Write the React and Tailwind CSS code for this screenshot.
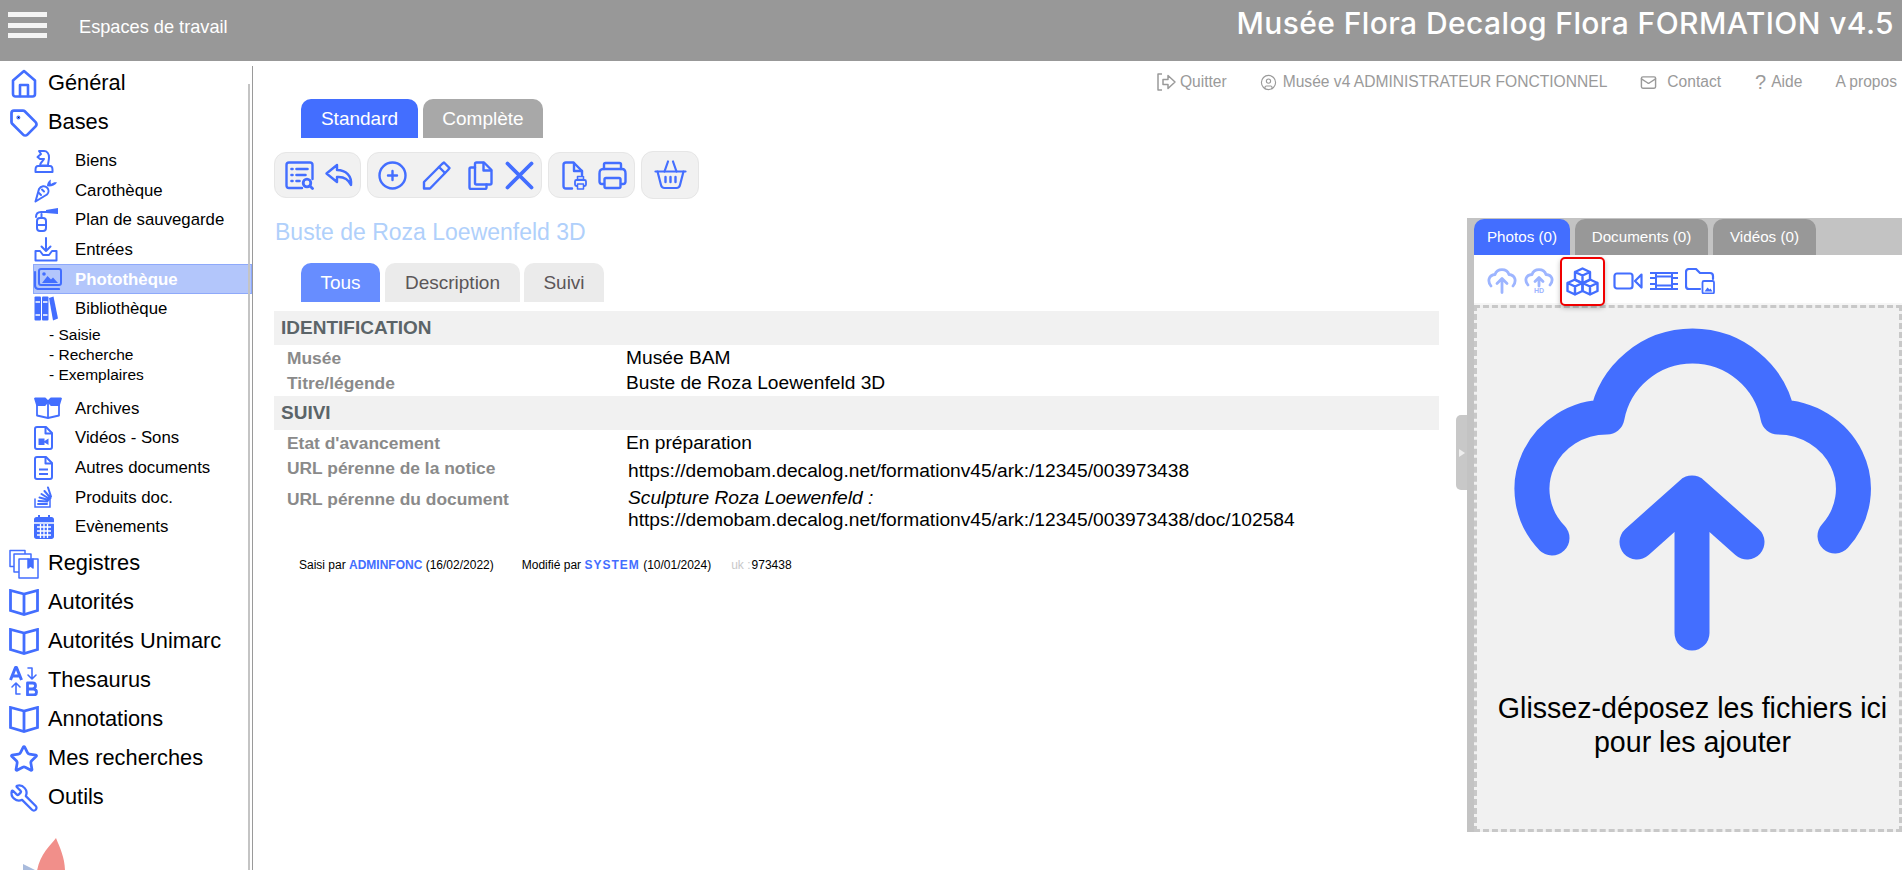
import React from "react";
import { Tag, Star, Wrench, Mail, CircleUser } from "lucide-react";

const BLUE = "#436eff";

function Ico({ children, w: width = 24, h: height = 24, sw = 2, className = "" }) {
  return (
    <svg width={width} height={height} viewBox={`0 0 ${width} ${height}`} fill="none" stroke={BLUE} strokeWidth={sw} strokeLinecap="round" strokeLinejoin="round" className={className}>
      {children}
    </svg>
  );
}

const Home = () => (
  <Ico w={28} h={29} sw={2.600}>
    <path d="M3 11.500 14 2l11 9.500V25c0 1.500-1 2.500-2.500 2.500h-17C4 27.500 3 26.500 3 25V11.500Z" />
    <path d="M10 27V16h8v11" />
  </Ico>
);

const OpenBook = () => (
  <Ico w={30} h={27} sw={2.800}>
    <path d="M15 5 1.500 1.500v20L15 25.500l13.500-4v-20L15 5Z" strokeLinecap="butt" strokeLinejoin="miter" />
    <path d="M15 5v20" strokeLinecap="butt" />
  </Ico>
);

const Stack = () => (
  <Ico w={30} h={30} sw={1.500}>
    <rect x="1" y="1.500" width="15" height="16" />
    <rect x="5" y="5" width="17" height="18" fill="#fff" />
    <path d="M10 29V10h19v19H10Z" fill="#fff" />
    <path d="M19 10v9l2.500-2 2.500 2v-9" fill={BLUE} />
  </Ico>
);

const Thesaurus = () => (
  <svg width="30" height="30" viewBox="0 0 30 30" fill="none" stroke={BLUE} strokeWidth="1.600" strokeLinecap="round" strokeLinejoin="round">
    <path d="M1.500 14 6.500 1.500h1L12.500 14M3.500 10h7" strokeWidth="3" strokeLinecap="butt" />
    <path d="M19 2h4v10M19 9l4 4 4-4" />
    <path d="M11 28H7V18M3 21l4-4 4 4" />
    <path d="M18.500 17h5c4 0 4 5.500 0 6h-5Zm0 6h6c4 .5 4 6 0 6h-6Z" strokeWidth="2.800" />
  </svg>
);

// petites icones de la section Bases
const subIcons = {
  biens: (
    <Ico w={20} h={24} sw={2}>
      <path d="M5 2h5c3 0 5 3 5 6.500 0 3-1 4.500-1 8H6c0-3 3-4 4-6.500H6L3.500 8 7 5 5 2Z" />
      <path d="M1.500 23v-2c0-2 1-4 2.500-4h12c1.500 0 2.500 2 2.500 4v2h-17Z" />
    </Ico>
  ),
  caro: (
    <Ico w={24} h={25} sw={2}>
      <path d="M1.500 23.500 5 11c2-3.500 6-3.500 8-1.500s2 5 0 7l-11.500 7Z" />
      <path d="M5 15l2 2M8 11.500l2 2" />
      <path d="M13 8c0-2 1-5 4-6.500-.5 2-.5 3 0 4.500 2-1.500 4-2 6-1.500-1.500 2.500-5 4-8 4" fill={BLUE} stroke="none" />
    </Ico>
  ),
  plan: (
    <Ico w={24} h={24} sw={2}>
      <rect x="3" y="10" width="9" height="13" rx="3" />
      <path d="M3 17h9M7.500 10V6M2 9c0-3 2-5 5-5h5" />
      <path d="M12 2 24 0v6L12 5V2Z" fill={BLUE} stroke="none" />
    </Ico>
  ),
  entrees: (
    <Ico w={24} h={25} sw={2}>
      <path d="M12 1v13M7.500 9.500l4.500 4.500 4.500-4.500" />
      <path d="M1.500 14v9.500h21V14H18l-3 4H9l-3-4H1.500Z" />
    </Ico>
  ),
  photo: (
    <svg width="28" height="22" viewBox="0 0 28 22" fill="none" stroke={BLUE} strokeWidth="2" strokeLinecap="round" strokeLinejoin="round">
      <rect x="5" y="1" width="22" height="16" rx="2" />
      <path d="M1 4v13c0 2.500 1.500 4 4 4h20" strokeWidth="2.200" />
      <path d="M8 15l5.500-7 3.500 3.500 2-2 5 5.500H8Z" fill={BLUE} stroke="none" />
      <circle cx="10" cy="6" r="1.800" fill={BLUE} stroke="none" />
    </svg>
  ),
  biblio: (
    <svg width="24" height="25" viewBox="0 0 24 25" fill={BLUE}>
      <rect x="0.500" y="0.500" width="6.500" height="24" rx="1" />
      <rect x="8" y="0.500" width="6.500" height="24" rx="1" />
      <path d="M15 2 19.500 0.500 24 22.500l-5 2L15 2Z" />
      <path d="M1.500 6h4.500M1.500 19h4.500M9 6h4.500M9 19h4.500" stroke="#fff" strokeWidth="1.400" />
    </svg>
  ),
  archives: (
    <svg width="28" height="22" viewBox="0 0 28 22" fill="none" stroke={BLUE} strokeWidth="1.800" strokeLinejoin="round">
      <path d="M1 1.500h10l3 3-3 3.500H3L1 1.500Zm26 0H17l-3 3 3 3.500h8l2-6.500Z" fill={BLUE} />
      <path d="M3 8v10.500L14 21l11-2.500V8M14 5v16" />
    </svg>
  ),
  videos: (
    <svg width="19" height="24" viewBox="0 0 19 24" fill="none" stroke={BLUE} strokeWidth="2" strokeLinejoin="round">
      <path d="M3 1h9l6 6v14c0 1.500-.5 2-2 2H3c-1.500 0-2-.5-2-2V3c0-1.500.5-2 2-2Z" />
      <path d="M11.500 1.500V7.500h6" />
      <path d="M4.500 12.500h6v6.500h-6Zm6 2.500 4-2.500v6.500l-4-2.500Z" fill={BLUE} stroke="none" />
    </svg>
  ),
  autres: (
    <svg width="19" height="24" viewBox="0 0 19 24" fill="none" stroke={BLUE} strokeWidth="2" strokeLinejoin="round">
      <path d="M3 1h9l6 6v14c0 1.500-.5 2-2 2H3c-1.500 0-2-.5-2-2V3c0-1.500.5-2 2-2Z" />
      <path d="M11.500 1.500V7.500h6M5 13.500h9M5 18h9" />
    </svg>
  ),
  produits: (
    <svg width="18" height="22" viewBox="0 0 18 22" fill="none" stroke={BLUE} strokeWidth="1.500" strokeLinecap="round">
      <path d="M1 13v8h15v-8" />
      <path d="M4 18h9M4.500 15l9 .5M5.500 11.500 14.500 14M7.500 8l8 5M10.500 5l6 7M14 1.500l3 9" strokeWidth="2" />
    </svg>
  ),
  event: (
    <svg width="20" height="24" viewBox="0 0 20 24" fill={BLUE}>
      <path d="M2.500 2H4V0h2v2h8V0h2v2h1.500C19 2 20 3 20 4.500v17c0 1.500-1 2.500-2.500 2.500h-15C1 24 0 23 0 21.500v-17C0 3 1 2 2.500 2Z" />
      <path d="M0 8h20M3 12h14M3 16h14M3 20h14M6.500 9v14M10 9v14M13.500 9v14" stroke="#fff" strokeWidth="1.300" />
    </svg>
  ),
};

function MainItem({ icon, label }) {
  return (
    <div className="flex items-center h-[39px] pl-[9px]">
      <span className="w-[30px] h-[30px] flex items-center justify-center shrink-0">{icon}</span>
      <span className="ml-[9px] text-[21.800px] text-black">{label}</span>
    </div>
  );
}

function SubItem({ icon, label, active }) {
  return (
    <div className={`flex items-center h-[29.600px] ml-[33px] border ${active ? "bg-[#b3c6fb] border-[#8ea9fa]" : "border-transparent"}`}>
      <span className="w-[30px] flex items-center justify-start shrink-0">{icon}</span>
      <span className={`ml-[11px] text-[16.800px] ${active ? "text-white font-bold" : "text-black"}`}>{label}</span>
    </div>
  );
}

function Sidebar() {
  return (
    <aside className="w-[253px] shrink-0 relative h-[809px] overflow-hidden pt-[3px]">
      <div className="absolute right-0 top-[5px] bottom-0 w-[1px] bg-[#9a9a9a]" />
      <div className="absolute right-[3px] top-[23px] bottom-0 w-[2px] bg-[#c4c4c4]" />
      <MainItem label="Général" icon={<Home />} />
      <MainItem label="Bases" icon={<Tag size={30} color={BLUE} strokeWidth={2.200} />} />
      <div className="mt-[4px] pr-[1px]">
        <SubItem icon={subIcons.biens} label="Biens" />
        <SubItem icon={subIcons.caro} label="Carothèque" />
        <SubItem icon={subIcons.plan} label="Plan de sauvegarde" />
        <SubItem icon={subIcons.entrees} label="Entrées" />
        <SubItem icon={subIcons.photo} label="Photothèque" active />
        <SubItem icon={subIcons.biblio} label="Bibliothèque" />
        <div className="ml-[49px] mt-[1px] mb-[9px] text-[15.500px] leading-[20px] text-black">
          <div>- Saisie</div>
          <div>- Recherche</div>
          <div>- Exemplaires</div>
        </div>
        <SubItem icon={subIcons.archives} label="Archives" />
        <SubItem icon={subIcons.videos} label="Vidéos - Sons" />
        <SubItem icon={subIcons.autres} label="Autres documents" />
        <SubItem icon={subIcons.produits} label="Produits doc." />
        <SubItem icon={subIcons.event} label="Evènements" />
      </div>
      <div className="mt-[2.500px]">
        <MainItem label="Registres" icon={<Stack />} />
        <MainItem label="Autorités" icon={<OpenBook />} />
        <MainItem label="Autorités Unimarc" icon={<OpenBook />} />
        <MainItem label="Thesaurus" icon={<Thesaurus />} />
        <MainItem label="Annotations" icon={<OpenBook />} />
        <MainItem label="Mes recherches" icon={<Star size={30} color={BLUE} strokeWidth={2.200} />} />
        <MainItem label="Outils" icon={<Wrench size={30} color={BLUE} strokeWidth={1.800} className="-scale-x-100" />} />
      </div>
      <svg width="60" height="33" viewBox="0 0 60 33" className="mt-[21px] ml-[20px]">
        <path d="M3 26 17 33H3Z" fill="#a9bbdc" />
        <path d="M36 0C30 8 20 16 17 33H45C45 20 40 10 36 0Z" fill="#f18f8a" />
      </svg>
    </aside>
  );
}

function TopLinks() {
  return (
    <div className="flex items-center justify-end h-[42px] pr-[5px] text-[15.600px] text-[#9a9a9a]">
      <svg width="21" height="20" viewBox="0 0 21 20" fill="none" stroke="currentColor" strokeWidth="1.500" strokeLinejoin="round" className="mr-[3px]">
        <path d="M6 2H2v16h4" />
        <path d="M7 7.500h5V3.500l7 6.500-7 6.500v-4H7v-5Z" />
      </svg>
      <span>Quitter</span>
      <CircleUser size={17} strokeWidth={1.600} className="ml-[33px] mr-[6px]" />
      <span>Musée v4 ADMINISTRATEUR FONCTIONNEL</span>
      <Mail size={17} strokeWidth={2} className="ml-[33px] mr-[10px]" />
      <span>Contact</span>
      <span className="ml-[34px] mr-[5px] text-[20px] leading-none">?</span>
      <span>Aide</span>
      <span className="ml-[33px]">A propos</span>
    </div>
  );
}

function Tab({ label, className }) {
  return (
    <div className={`h-full flex items-center justify-center rounded-t-[10px] ${className}`}>{label}</div>
  );
}

function Tool({ children, className }) {
  return (
    <div className={`flex items-center h-[46px] bg-[#f1f1f1] border border-[#e6e6e6] rounded-[12px] ${className}`}>
      {children}
    </div>
  );
}

function Toolbar() {
  return (
    <div className="flex items-center gap-[6px] mt-[13px] ml-[21px]">
      <Tool className="w-[87px] pl-[10px] gap-[10px]">
        <Ico w={29} h={29} sw={2.400}>
          <path d="M17 27H4c-1.500 0-2.500-1-2.500-2.500V4C1.500 2.500 2.500 1.500 4 1.500h21c1.500 0 2.500 1 2.500 2.500v14" />
          <path d="M6.500 8h1M11.500 8h11M6.500 14h1M11.500 14h9M6.500 20h1M11.500 20h3" strokeWidth="2.600" />
          <circle cx="22" cy="22" r="3.800" strokeWidth="2.800" />
          <path d="M25 25l2.500 2.500" strokeWidth="2.800" />
        </Ico>
        <Ico w={29} h={29} sw={2.400}>
          <path d="M13 4 2.500 12.500 13 21v-5c6-.5 11 1.500 14 8 1-9-5-15-14-15V4Z" />
        </Ico>
      </Tool>
      <Tool className="w-[175px] pl-[10px]">
        <Ico w={29} h={29} sw={2.400}>
          <circle cx="14.500" cy="14.500" r="13" />
          <path d="M14.500 10v9M10 14.500h9" />
        </Ico>
        <Ico w={29} h={29} sw={2.400} className="ml-[15px]">
          <path d="M2 27.500V21L20 3l2-1.500L27.500 7 26 9 8 27.500H2Z" />
          <path d="M17 6l6 6" />
        </Ico>
        <Ico w={25} h={29} sw={2.400} className="ml-[17px]">
          <path d="M7 22V3c0-1 .5-1.500 1.500-1.500H16L23.500 9v13c0 1-.5 1.500-1.500 1.500H8.500C7.500 23.500 7 23 7 22Z" />
          <path d="M15.500 2v7.500h7.500" />
          <path d="M7 6.500H3C2 6.500 1.500 7 1.500 8v18.500c0 1 .5 1.500 1.500 1.500h14c1 0 1.500-.5 1.500-1.500v-3" />
        </Ico>
        <Ico w={29} h={29} sw={3.800} className="ml-[12px]">
          <path d="M2.500 2.500l24 24M26.500 2.500l-24 24" />
        </Ico>
      </Tool>
      <Tool className="w-[87px] pl-[13px] gap-[11px]">
        <Ico w={25} h={29} sw={2.400}>
          <path d="M10 27.500H4c-1.500 0-2.500-1-2.500-2.500V4c0-1.500 1-2.500 2.500-2.500h7.500L20 10v4" />
          <path d="M12 2v8h8" />
          <rect x="13" y="19" width="11" height="6" rx="1.500" strokeWidth="1.800" />
          <rect x="15.500" y="15.500" width="6" height="3" strokeWidth="1.500" />
          <rect x="15.500" y="23" width="6" height="5" strokeWidth="1.500" fill="#f1f1f1" />
        </Ico>
        <Ico w={29} h={29} sw={2.400}>
          <path d="M6 8V3.500c0-1 .5-1.500 1.500-1.500h14c1 0 1.500.5 1.500 1.500V8" />
          <path d="M6 23H4c-1.500 0-2.500-1-2.500-2.500v-8C1.500 9.500 3 8 5 8h19c2 0 3.500 1.500 3.500 4.500v8c0 1.500-1 2.500-2.500 2.500h-2" />
          <rect x="6.500" y="17" width="16" height="10" rx="1.500" />
        </Ico>
      </Tool>
      <Tool className="w-[58px] !h-[48px] justify-center">
        <Ico w={33} h={30} sw={2.200}>
          <path d="M1.500 11.500h30" />
          <path d="M3.500 11.500 7 25c.5 2 1.500 3 3.500 3h12c2 0 3-1 3.500-3l3.500-13.500" />
          <path d="M10.500 11.500 14 1.500M22.500 11.500 19 1.500" />
          <path d="M11.500 17v5M16.500 17v5M21.500 17v5" strokeWidth="2.400" />
        </Ico>
      </Tool>
    </div>
  );
}

function SectionHead({ label }) {
  return (
    <div className="h-[34px] bg-[#f1f1f1] flex items-center pl-[7px] text-[19px] font-bold text-[#5b6468]">{label}</div>
  );
}

function Row({ label, children, className = "" }) {
  return (
    <div className={`flex ${className}`}>
      <div className="w-[352px] pl-[13px] text-[17.400px] font-bold text-[#8a8a8a]">{label}</div>
      <div className="text-[19.200px] text-black">{children}</div>
    </div>
  );
}

function Notice() {
  return (
    <div className="ml-[21px] mt-[9px] w-[1165px]">
      <SectionHead label="IDENTIFICATION" />
      <Row label="Musée" className="h-[25px] items-center pt-[1px]">Musée BAM</Row>
      <Row label="Titre/légende" className="h-[26px] items-center pt-[1px]">Buste de Roza Loewenfeld 3D</Row>
      <SectionHead label="SUIVI" />
      <Row label="Etat d'avancement" className="h-[25px] items-center pt-[1px]">En préparation</Row>
      <div className="flex h-[31px] items-center">
        <div className="w-[352px] pl-[13px] text-[17.400px] font-bold text-[#8a8a8a] -mt-[5px]">URL pérenne de la notice</div>
        <div className="pl-[2px] text-[19.200px] text-black mt-[2px]">https://demobam.decalog.net/formationv45/ark:/12345/003973438</div>
      </div>
      <div className="flex mt-[1px]">
        <div className="w-[352px] pl-[13px] text-[17.400px] font-bold text-[#8a8a8a] -mt-[1px]">URL pérenne du document</div>
        <div className="pl-[2px] text-[19.200px] leading-[22px] text-black">
          <div className="italic">Sculpture Roza Loewenfeld :</div>
          <div>https://demobam.decalog.net/formationv45/ark:/12345/003973438/doc/102584</div>
        </div>
      </div>
      <div className="flex mt-[25px] ml-[25px] text-[12px] text-black">
        <span>Saisi par <span className="text-[#436eff] font-bold">ADMINFONC</span> (16/02/2022)</span>
        <span className="ml-[28px]">Modifié par <span className="text-[#436eff] font-bold tracking-[1px]">SYSTEM</span> (10/01/2024)</span>
        <span className="ml-[20px] text-[#c8c8c8]">uk :</span>
        <span className="ml-[1px]">973438</span>
      </div>
    </div>
  );
}

function UploadSmall({ hd }) {
  return (
    <svg width="30" height="26" viewBox="0 0 30 26" fill="none" stroke="#9db5ff" strokeWidth="2.800" strokeLinecap="round" strokeLinejoin="round">
      <path d={hd ? "M4 17C0 12 2 7 8 6.500 10 0 20 0 22 6.500 28 7 30 12 26 17" : "M4 18C0 13 2 7 8 6.500 10 0 20 0 22 6.500 28 7 30 13 26 18"} />
      <path d={hd ? "M15 18V10M11 13.500l4-4 4 4" : "M15 24.500V11M10 15.500l5-5 5 5"} />
      {hd && <text x="15" y="25" textAnchor="middle" fontSize="7" fontWeight="bold" fill="#9db5ff" stroke="none" fontFamily="Liberation Sans">HD</text>}
    </svg>
  );
}

function RightPanel() {
  return (
    <div className="w-[435px] shrink-0 mt-[157px] h-[614px] relative flex flex-col bg-[#c3c3c3] pl-[7px]">
      <div className="absolute left-[-11px] top-[197px] w-[11px] h-[75px] bg-[#c8c8c8] rounded-l-[5px] flex items-center justify-center">
        <span className="border-y-[4px] border-y-transparent border-l-[6px] border-l-[#eeeeee]" />
      </div>
      <div className="flex h-[36px] mt-[1px] gap-[5px] text-[15.200px] text-white">
        <Tab label="Photos (0)" className="w-[96px] bg-[#436eff] pt-[1px]" />
        <Tab label="Documents (0)" className="w-[133px] bg-[#989898] pt-[1px]" />
        <Tab label="Vidéos (0)" className="w-[103px] bg-[#989898] pt-[1px]" />
      </div>
      <div className="h-[48px] bg-white flex items-center pl-[13px] pt-[3px] relative">
        <UploadSmall />
        <span className="w-[7px]" />
        <UploadSmall hd />
        {/* la boite rouge deborde sur la zone de depot */}
        <div className="ml-[6px] self-start -mt-[1px] relative z-10 w-[45px] h-[49px] bg-white border-2 border-[#f00000] rounded-[5px] shadow-[0_2px_5px_rgba(0,0,0,0.25)] flex items-center justify-center">
          <Ico w={33} h={29} sw={2.400}>
            <path d="M16.500 1.500l7.500 3.500v8l-7.500 3.500L9 13V5l7.500-3.500ZM9 5l7.500 3.500L24 5M16.500 8.500v8" />
            <path d="M9 12.500l7.500 3.500v8L9 27.500 1.500 24v-8L9 12.500ZM1.500 16 9 19.500l7.500-3.500M9 19.500v8" />
            <path d="M24 12.500l7.500 3.500v8L24 27.500 16.500 24v-8l7.500-3.500ZM16.500 16l7.500 3.500 7.500-3.500M24 19.500v8" />
          </Ico>
        </div>
        <Ico w={30} h={18} sw={2.200} className="ml-[8px]">
          <rect x="1.500" y="1.500" width="18" height="15" rx="2.500" />
          <path d="M28.500 2.500 22 9l6.500 6.500v-13Z" />
        </Ico>
        <Ico w={30} h={20} sw={2} className="ml-[6px]">
          <path d="M1 2h28M1 18h28M7 2v16M23 2v16M7 5.500h16M7 14.500h16" strokeLinecap="butt" />
          <path d="M1 7h5M1 13h5M24 7h5M24 13h5" strokeLinecap="butt" />
        </Ico>
        <Ico w={30} h={26} sw={2.200} className="ml-[6px]">
          <path d="M15 21H4c-2 0-3-1-3-3V4c0-2 1-3 3-3h7l4 4h10c2 0 3 1 3 3v3" />
          <rect x="17.500" y="13" width="11.500" height="12.500" rx="1.500" fill="#fff" strokeWidth="1.800" />
          <path d="M19.500 23.500l3-4 2 2 1-1 2 3h-8Z" fill={BLUE} stroke="none" />
        </Ico>
      </div>
      <div className="h-[2px] bg-[#f6f6f6]" />
      <div className="flex-1 bg-[#f1f1f1] border-[3px] border-dashed border-[#c8c8c8] flex flex-col items-center pl-[9px]">
        <svg width="358" height="324" viewBox="0 0 358 324" className="mt-[19px] shrink-0" fill="none" stroke={BLUE} strokeWidth="35" strokeLinecap="round" strokeLinejoin="round">
          <path d="M38 211A75 72 0 0 1 93 90A87 87 0 0 1 264 90A76 72 0 0 1 321 209" />
          <path d="M178 306V166M123 215l55-49 55 49" />
        </svg>
        <div className="mt-[40px] text-[28.600px] leading-[34px] text-center text-black">
          Glissez-déposez les fichiers ici
          <br />
          pour les ajouter
        </div>
      </div>
    </div>
  );
}

export default function App() {
  return (
    <div className="w-[1902px] h-[870px] overflow-hidden bg-white font-['Liberation_Sans',Arial,sans-serif]">
      <header className="h-[61px] bg-[#989898] flex items-start text-white">
        <div className="ml-[8px] mt-[12px] w-[39px] flex flex-col gap-[5.500px]">
          <span className="h-[5px] bg-[#f4f4f4]" />
          <span className="h-[5px] bg-[#f4f4f4]" />
          <span className="h-[5px] bg-[#f4f4f4]" />
        </div>
        <span className="ml-[32px] mt-[14px] text-[18.200px] leading-[27px]">Espaces de travail</span>
        <span className="ml-auto mr-[8px] mt-[3px] text-[30px] leading-[40px] tracking-[0.400px] font-medium font-['Inter',sans-serif]">Musée Flora Decalog Flora FORMATION v4.5</span>
      </header>
      <div className="flex">
        <Sidebar />
        <main className="flex-1 relative min-w-0">
          <div className="absolute right-0 top-0 left-0">
            <TopLinks />
          </div>
          <div className="flex">
            <div className="flex-1 min-w-0 pt-[38px]">
              <div className="flex h-[39px] ml-[48px] gap-[5px] text-[19px] text-white">
                <Tab label="Standard" className="w-[117px] bg-[#436eff] pt-[1px]" />
                <Tab label="Complète" className="w-[120px] bg-[#a8a8a8] pt-[1px]" />
              </div>
              <Toolbar />
              <div className="ml-[22px] mt-[19px] h-[28px] text-[23px] leading-[28px] text-[#b0d0fb]">Buste de Roza Loewenfeld 3D</div>
              <div className="flex h-[39px] ml-[48px] mt-[17px] text-[19px]">
                <Tab label="Tous" className="w-[79px] bg-[#678dff] text-white pt-[1px]" />
                <Tab label="Description" className="ml-[5px] w-[135px] bg-[#ebebeb] text-[#5b5658] pt-[1px]" />
                <Tab label="Suivi" className="ml-[4px] w-[80px] bg-[#ebebeb] text-[#5b5658] pt-[1px]" />
              </div>
              <Notice />
            </div>
            <RightPanel />
          </div>
        </main>
      </div>
    </div>
  );
}
